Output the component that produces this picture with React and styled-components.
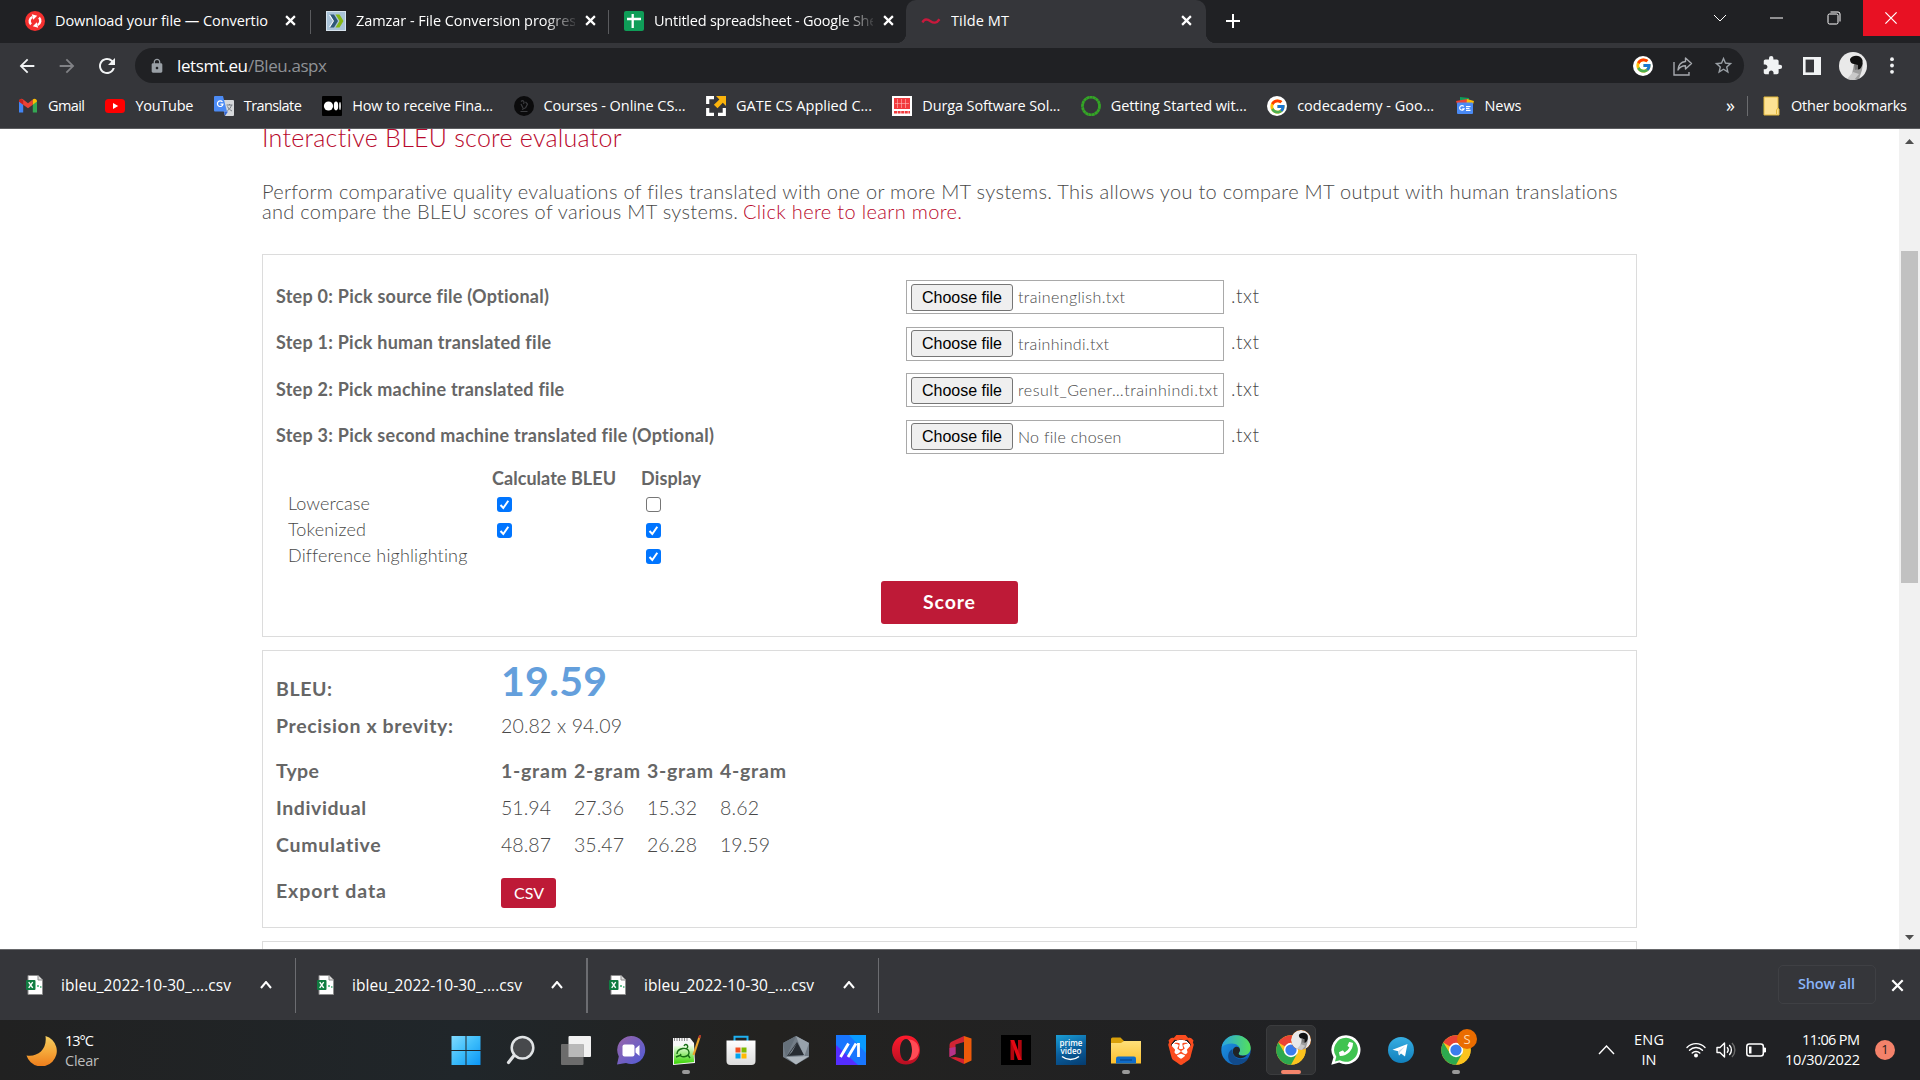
import React, { useLayoutEffect, useRef, useState } from "react";
import styled, { createGlobalStyle, css } from "styled-components";
import { FcGoogle } from "react-icons/fc";
import { MdExtension, MdLock, MdStarBorder, MdRefresh, MdArrowBack, MdArrowForward } from "react-icons/md";
import { SiBrave } from "react-icons/si";
import { FaPhoneAlt } from "react-icons/fa";

const ui = `"Open Sans", "Noto Sans", sans-serif`;
const site = `Lato, "Open Sans", sans-serif`;

const GlobalStyle = createGlobalStyle`
  * { box-sizing: border-box; }
  body { margin: 0; background: #202124; overflow: hidden; }
  svg { display: block; flex: none; }
`;

/* ---------- text ---------- */

const Line = styled.span`
  display: block;
  flex: none;
  white-space: pre;
  width: ${(p) => (p.$w ? p.$w + "px" : "auto")};
`;
const Ink = styled.span`
  display: inline-block;
`;

/* Tracks a single line of text so that it fills exactly `w` pixels. */
function Fit({ w, children }) {
  const ref = useRef(null);
  const [ls, setLs] = useState(0);
  useLayoutEffect(() => {
    const natural = ref.current.getBoundingClientRect().width;
    setLs((w - natural) / Math.max(1, String(children).length - 1));
  }, [w, children]);
  return (
    <Line $w={w}>
      <Ink ref={ref} style={{ letterSpacing: ls + "px" }}>{children}</Ink>
    </Line>
  );
}

/* ---------- window ---------- */

const Screen = styled.div`
  width: 1920px;
  height: 1080px;
  display: flex;
  flex-direction: column;
  overflow: hidden;
  font-family: ${ui};
  font-size: 14.5px;
  color: #fff;
`;

const TabStrip = styled.div`
  height: 43px;
  flex: none;
  display: flex;
  background: #202124;
  padding-left: 10px;
`;
const Tab = styled.div`
  position: relative;
  width: ${(p) => p.$w}px;
  height: 43px;
  padding: 0 14px 2px 15px;
  display: flex;
  align-items: center;
  gap: 10px;
  line-height: 20px;
  ${(p) => p.$active && css`
    background: #35363a;
    border-radius: 10px 10px 0 0;
    &::before, &::after {
      content: "";
      position: absolute;
      bottom: 0;
      width: 10px;
      height: 10px;
    }
    &::before { left: -10px; background: radial-gradient(circle at 0 0, #202124 10px, #35363a 10.5px); }
    &::after { right: -10px; background: radial-gradient(circle at 100% 0, #202124 10px, #35363a 10.5px); }
  `}
`;
const TabTitle = styled.div`
  width: 219px;
  flex: none;
  overflow: hidden;
  ${(p) => p.$fade && css`mask-image: linear-gradient(90deg, #000 86%, transparent 102%);`}
`;
const TabRule = styled.i`
  flex: none;
  width: 1px;
  height: 24px;
  margin-top: 10px;
  background: #5a5b5e;
`;
const Favicon = styled.span`
  width: 20px;
  height: 20px;
  flex: none;
`;
const TabClose = styled.span`
  margin-left: auto;
  display: flex;
`;
const NewTab = styled.span`
  display: flex;
  padding: 13px 0 0 19px;
`;
const WindowButtons = styled.div`
  margin-left: auto;
  display: flex;
`;
const WinButton = styled.span`
  width: 57px;
  height: 36px;
  display: flex;
  align-items: center;
  justify-content: center;
  padding-right: 2px;
  background: ${(p) => (p.$close ? "#e81123" : "transparent")};
`;

const Toolbar = styled.div`
  height: 42px;
  flex: none;
  display: flex;
  align-items: center;
  background: #35363a;
  padding: 3px 0 0 17px;
`;
const NavButton = styled.span`
  width: 20px;
  margin-right: 20px;
  font-size: 22px;
  color: ${(p) => (p.$off ? "#818286" : "#f1f3f4")};
  display: flex;
  justify-content: center;
`;
const AddressBar = styled.div`
  width: 1609px;
  height: 35px;
  margin: 0 0 0 -2px;
  border-radius: 18px;
  background: #202124;
  display: flex;
  align-items: center;
  padding: 0 10px 0 14px;
  font-size: 17px;
  color: #9aa0a6;
`;
const Url = styled.div`
  display: flex;
  margin-left: 12px;
  line-height: 24px;
  color: #8f9296;
  b { font-weight: 400; color: #fff; }
`;
const AddressActions = styled.div`
  margin-left: auto;
  display: flex;
  align-items: center;
  gap: 20px;
`;
const GBadge = styled.span`
  width: 20px;
  height: 20px;
  flex: none;
  border-radius: 50%;
  background: #fff;
  display: flex;
  align-items: center;
  justify-content: center;
`;
const ToolbarActions = styled.div`
  display: flex;
  align-items: center;
  margin-left: 18px;
  color: #f1f3f4;
`;
const Gap = styled.i`
  width: ${(p) => p.$w}px;
  flex: none;
`;

const Bookmarks = styled.div`
  height: 44px;
  flex: none;
  display: flex;
  align-items: center;
  background: #35363a;
  border-bottom: 1px solid #5c5d60;
  padding: 0 13px 1px 18px;
  line-height: 20px;
`;
const Bookmark = styled.span`
  display: flex;
  align-items: center;
  gap: 10px;
  margin-right: 20.4px;
`;
const More = styled.span`
  margin-left: auto;
  font-size: 18px;
  padding-bottom: 3px;
`;
const BarRule = styled.i`
  width: 1px;
  height: 20px;
  background: #6b6c6f;
  margin: 0 15px 0 12px;
`;

/* ---------- page ---------- */

const Viewport = styled.div`
  height: 820px;
  flex: none;
  display: flex;
  justify-content: space-between;
  overflow: hidden;
  background: #fff;
  font-family: ${site};
  color: #666;
`;
const Page = styled.main`
  width: 1375px;
  margin-left: 262px;
`;
const Title = styled.h1`
  margin: -7px 0 29px;
  font-size: 25px;
  line-height: 30px;
  font-weight: 300;
  color: #b8082c;
`;
const Intro = styled.div`
  font-size: 20px;
  line-height: 20px;
  font-weight: 300;
  color: #484848;
  height: 59px;
  margin-bottom: 14px;
`;
const IntroRow = styled.div`
  display: flex;
  gap: 5px;
`;
const LearnMore = styled.a`
  color: #b8082c;
`;
const Panel = styled.section`
  border: 1px solid #dcdcdc;
  height: ${(p) => p.$h}px;
  padding: ${(p) => p.$pad} 13px 0;
  margin-bottom: 13px;
`;
const StepList = styled.div`
  display: flex;
  flex-direction: column;
  gap: 12.67px;
`;
const Step = styled.div`
  display: grid;
  grid-template-columns: 630px 318px auto;
  align-items: center;
  height: 34px;
  font-size: 18px;
`;
const StepLabel = styled.div`
  font-weight: 700;
  line-height: 24px;
  padding-bottom: 3px;
`;
const FileField = styled.div`
  height: 34px;
  border: 1px solid #a9a9a9;
  display: flex;
  align-items: center;
  padding-left: 4px;
  gap: 5px;
  font-size: 16px;
  font-weight: 300;
  line-height: 20px;
  color: #484848;
`;
const ChooseButton = styled.span`
  width: 102px;
  height: 27px;
  border: 1px solid #767676;
  border-radius: 3px;
  background: #efefef;
  color: #000;
  font: 400 16px/25px "Liberation Sans", sans-serif;
  padding-left: 10px;
`;
const Extension = styled.div`
  padding: 0 0 4px 7px;
  font-size: 19px;
  font-weight: 300;
  color: #484848;
`;
const Options = styled.div`
  display: grid;
  grid-template-columns: 204px 149px auto;
  grid-template-rows: 27px 26px 26px 26px;
  align-items: center;
  margin: 11px 0 11px 12px;
  font-weight: 300;
  font-size: 18px;
  line-height: 22px;
`;
const OptionHead = styled.div`
  font-weight: 700;
  font-size: 18px;
`;
const OptionName = styled.div`
  padding-bottom: 4px;
  color: #484848;
`;
const Box = styled.span`
  width: 15px;
  height: 15px;
  margin-left: 5px;
  display: block;
  border-radius: 3px;
  border: ${(p) => (p.$on ? "0" : "1px solid #767676")};
  background: ${(p) => (p.$on ? "#0075ff" : "#fff")};
`;
const ScoreButton = styled.div`
  width: 137px;
  height: 43px;
  margin-left: 605px;
  border-radius: 3px;
  background: #be1a37;
  color: #fff;
  font-size: 19.5px;
  font-weight: 700;
  line-height: 41px;
  padding-left: 42px;
`;

const ResultRow = styled.div`
  display: flex;
  align-items: baseline;
  height: ${(p) => p.$h || 20}px;
  line-height: 20px;
  margin-top: ${(p) => p.$mt}px;
  font-size: 19.5px;
  font-weight: ${(p) => (p.$head ? 700 : 300)};
  color: ${(p) => (p.$head ? "#666" : "#484848")};
`;
const ResultName = styled.div`
  width: 225px;
  font-weight: 700;
  color: #666;
`;
const Gram = styled.div`
  width: 73px;
`;
const BleuScore = styled.div`
  font-size: 41px;
  line-height: 41px;
  font-weight: 700;
  color: #649fdc;
`;
const ExportRow = styled.div`
  display: flex;
  margin-top: 23px;
  font-size: 19.5px;
  line-height: 26px;
`;
const CsvButton = styled.span`
  width: 55px;
  height: 30px;
  border-radius: 3px;
  background: #be1a37;
  color: #fff;
  font-size: 16px;
  line-height: 29px;
  padding-left: 13px;
`;

const Scrollbar = styled.div`
  width: 21px;
  background: #f1f1f1;
  display: flex;
  flex-direction: column;
  align-items: center;
`;
const Thumb = styled.i`
  width: 17px;
  height: 332px;
  margin: 106px 0 auto;
  background: #c1c1c1;
`;

/* ---------- downloads ---------- */

const Downloads = styled.div`
  height: 71px;
  flex: none;
  display: flex;
  align-items: center;
  background: #35363a;
  border-top: 1px solid #67686b;
  padding: 0 16px 0 0;
  font-size: 15.5px;
  line-height: 22px;
`;
const Download = styled.div`
  width: ${(p) => p.$w}px;
  height: 55px;
  border-right: ${(p) => p.$rule || 1}px solid #6c6d71;
  display: flex;
  align-items: center;
  padding-left: ${(p) => p.$pl}px;
  gap: 18px;
`;
const DownloadToggle = styled.span`
  margin-left: 11px;
`;
const ShowAll = styled.div`
  width: 98px;
  height: 39px;
  margin: 0 15px 1px auto;
  border: 1px solid #3f4044;
  border-radius: 5px;
  color: #8ab4f8;
  font-size: 14.5px;
  font-weight: 600;
  line-height: 36px;
  padding-left: 19px;
`;

/* ---------- taskbar ---------- */

const Taskbar = styled.div`
  height: 60px;
  flex: none;
  display: flex;
  background: linear-gradient(90deg, #212121, #20262a 24%, #232220 40%, #202124 70%, #202124);
`;
const Weather = styled.div`
  width: 438px;
  display: flex;
  align-items: center;
  padding: 1px 0 0 25px;
  gap: 8px;
  line-height: 20px;
`;
const Muted = styled.div`
  color: #bdbdbd;
`;
const TaskButton = styled.div`
  position: relative;
  width: 50px;
  height: 50px;
  margin: 5px 5px 0 0;
  flex: none;
  border-radius: 5px;
  display: flex;
  align-items: center;
  justify-content: center;
  ${(p) => p.$active && css`background: #303133; border: 1px solid #3b3c3e;`}
  &::after {
    content: "";
    display: ${(p) => (p.$active || p.$open ? "block" : "none")};
    position: absolute;
    left: 50%;
    bottom: ${(p) => (p.$active ? 0 : 1)}px;
    width: ${(p) => (p.$active ? 20 : 8)}px;
    height: 4px;
    transform: translateX(-50%);
    border-radius: 2px;
    background: ${(p) => (p.$active ? "#f4856c" : "#9a9a9a")};
  }
`;
const TaskButtons = styled.div`
  display: flex;
  margin-left: 3px;
`;
const Tray = styled.div`
  margin-left: auto;
  display: flex;
  align-items: center;
  padding: 0 25px 0 0;
  line-height: 20px;
`;
const TrayText = styled.div`
  display: flex;
  flex-direction: column;
  align-items: ${(p) => p.$align};
`;
const Badge = styled.span`
  width: 20px;
  height: 20px;
  border-radius: 50%;
  background: #f4826a;
  color: #2a1c18;
  font-size: 13px;
  line-height: 19px;
  text-align: center;
  margin-left: 15px;
`;

/* ---------- drawings ---------- */

const Cross = ({ s = 9, c = "#fff", w = 2 }) => (
  <svg width={s} height={s} viewBox="0 0 10 10"><path d="M1 1l8 8M9 1l-8 8" stroke={c} strokeWidth={w} /></svg>
);
const Caret = ({ w, h, sw = 1.5, up, c = "#fff" }) => (
  <svg width={w} height={h} viewBox={`0 0 ${w} ${h}`}>
    <path d={up ? `M1 ${h - 1}L${w / 2} 1L${w - 1} ${h - 1}` : `M1 1L${w / 2} ${h - 1}L${w - 1} 1`} fill="none" stroke={c} strokeWidth={sw} />
  </svg>
);
const S = ({ v = "0 0 20 20", s = 20, children }) => <svg width={s} height={s} viewBox={v}>{children}</svg>;

const Convertio = () => (
  <S>
    <circle cx="10" cy="10" r="10" fill="#f5302f" />
    <path d="M6 13.400A4.600 4.600 0 0 1 7.300 6M14 6.600A4.600 4.600 0 0 1 12.700 14" fill="none" stroke="#fff" strokeWidth="2.400" />
    <path d="M6.800 3.200l5.400 1.600-4 4zM13.200 16.800l-5.400-1.600 4-4z" fill="#fff" />
  </S>
);
const Zamzar = () => (
  <S>
    <rect x=".5" y=".5" width="19" height="19" fill="#a9c3d8" stroke="#d7e3ec" />
    <path d="M3 4h3l4 6-4 6H3l4-6z" fill="#fff" />
    <path d="M4 3.500h4l4 6.500-4 6.500H4l4-6.500z" fill="#2f5878" />
    <path d="M9.500 3.500h4l4 6.500-4 6.500h-4l4-6.500z" fill="#86b817" />
  </S>
);
const Sheets = () => (
  <S><rect width="20" height="20" rx="2" fill="#0f9d58" /><path d="M8.700 3v14M3 8h14" stroke="#fff" strokeWidth="2.300" /></S>
);
const Tilde = () => (
  <S><path d="M1.500 11.500c2-4 5-3.400 8-1.300s6 2.300 9-2" fill="none" stroke="#c8193c" strokeWidth="2.400" /></S>
);
const GmailIcon = () => (
  <S>
    <path d="M1 16.500V5l4.200 3.200v8.300z" fill="#4285f4" />
    <path d="M19 16.500V5l-4.200 3.200v8.300z" fill="#34a853" />
    <path d="M1 5.500c0-2.600 2.700-3.300 4.200-2l4.800 3.700 4.800-3.700v5.200L10 12.300 5.200 8.700 1 5.500z" fill="#ea4335" />
    <path d="M14.800 3.500c1.500-1.300 4.200-.6 4.200 2l-4.200 3.200z" fill="#fbbc04" />
    <path d="M1 5.500c0-1.300.8-2.200 1.800-2.400l2.400.8v4.800z" fill="#c5221f" />
  </S>
);
const YouTubeIcon = () => (
  <S><rect y="3" width="20" height="14" rx="3.500" fill="#f00" /><path d="M8 7l5.200 3L8 13z" fill="#fff" /></S>
);
const TranslateIcon = () => (
  <S>
    <path d="M7 4h12a1 1 0 0 1 1 1v14a1 1 0 0 1-1 1h-8z" fill="#d6d8db" />
    <path d="M1 0h8l4 15.500H1a1 1 0 0 1-1-1V1a1 1 0 0 1 1-1z" fill="#4c8bf5" />
    <path d="M11 20l3-4.500h-4z" fill="#3367d6" />
    <path d="M8.500 6A2.800 2.800 0 1 0 9 8.200H6.500" fill="none" stroke="#fff" strokeWidth="1.200" />
    <path d="M12.500 9h6M15.500 8v1M17.500 9c-.6 2.700-2.400 4.500-4 5.500M13.500 10.500c1 2 2.500 3.500 4.500 4.500" fill="none" stroke="#757b82" />
  </S>
);
const MediumIcon = () => (
  <S><rect width="20" height="20" rx="1" fill="#000" /><circle cx="6.500" cy="10" r="4.600" fill="#fff" /><ellipse cx="14" cy="10" rx="2.200" ry="4.400" fill="#fff" /><ellipse cx="18" cy="10" rx=".8" ry="4" fill="#fff" /></S>
);
const CoursesIcon = () => (
  <S><circle cx="10" cy="10" r="10" fill="#0b0b0c" /><path d="M7 5.500c2-2 4 0 2.500 2.500M7 8l2 4M11.500 6l2 2-2 4M6.500 15.500h7M8 13.500l4-2" fill="none" stroke="#3c3d40" strokeWidth="1.200" /></S>
);
const GateIcon = () => (
  <S>
    <path d="M8 1.700H1.700V8M1.700 12v6.300H8M12 18.300h6.300V12" fill="none" stroke="#fff" strokeWidth="3.200" />
    <path d="M10 0h10v10l-3.200-3.200-5.300 5.500-3.600-3.600 5.500-5.300z" fill="#fbb40c" />
  </S>
);
const DurgaIcon = () => (
  <S>
    <rect width="20" height="20" fill="#fff" />
    <path d="M2 2h16v11H2z" fill="#f23a3d" />
    <path d="M5.500 3v9M9.500 3v9M13.500 3v9M3 7.500h14" stroke="#ffb8b8" strokeWidth=".6" />
    <path d="M2 16.200h16" stroke="#f23a3d" strokeWidth="2.600" strokeDasharray="3 .6" />
  </S>
);
const RingIcon = () => (
  <S><ellipse cx="10" cy="10" rx="8.500" ry="8.800" fill="none" stroke="#34a626" strokeWidth="2.800" strokeDasharray="3 .25" /></S>
);
const NewsIcon = () => (
  <S>
    <path d="M5 1l9 1v6H5z" fill="#0f9d58" />
    <path d="M1 5l11-2 2 8H3z" fill="#ea4335" />
    <path d="M12 3l7 2-2 7h-6z" fill="#fbbc04" />
    <rect x="2" y="6.500" width="16" height="11.500" rx="1" fill="#4a8af4" />
    <path d="M8.800 10.500a2.300 2.300 0 1 0 .3 2.300H7.300M11 10.500h4.500M11 12.400h3.500M11 14.300h4.500" fill="none" stroke="#fff" strokeWidth="1.200" />
  </S>
);
const FolderSheet = () => (
  <svg width="17" height="20" viewBox="0 0 17 20"><path d="M1 1h14v11l1 1v6H1z" fill="#fde293" stroke="#e3b93c" /><path d="M13.500 18v-4l1.500-2" fill="none" stroke="#e3b93c" /></svg>
);
const ShareIcon = () => (
  <S><path d="M1 6v13h15v-3" fill="none" stroke="#a6a9ae" strokeWidth="1.400" /><path d="M12.500 2l6 5.500-6 5.500v-3.200c-4 0-6 1.500-7.500 4.200.3-4.500 2.500-8 7.500-8.500z" fill="none" stroke="#a6a9ae" strokeWidth="1.400" strokeLinejoin="round" /></S>
);
const SidePanel = () => (
  <svg width="18" height="18" viewBox="0 0 18 18"><rect x="1.300" y="1.300" width="15.400" height="15.400" fill="none" stroke="#f1f3f4" strokeWidth="2.600" /><path d="M11 1h6v16h-6z" fill="#f1f3f4" /></svg>
);
const Face = ({ s = 28 }) => (
  <S s={s} v="0 0 28 28">
    <circle cx="14" cy="14" r="14" fill="#e9e9e9" />
    <path d="M15 12l9-1-1 7-3 9-8 .5z" fill="#9d9d9d" />
    <path d="M11 7c3-5 11-4 12.500 1 .5 4-.5 7-2.500 9-2 1-3 0-4-1l-1-4c-3 0-5-1-5-5z" fill="#111" />
    <path d="M15 12l4 1v4l-3 1z" fill="#777" />
    <path d="M14 20l-6 7 7 1 5-6z" fill="#c9c9c9" />
  </S>
);
const Dots = () => (
  <svg width="4" height="17" viewBox="0 0 4 17"><g fill="#f1f3f4"><circle cx="2" cy="2.200" r="1.900" /><circle cx="2" cy="8.500" r="1.900" /><circle cx="2" cy="14.800" r="1.900" /></g></svg>
);
const Excel = () => (
  <svg width="17" height="20" viewBox="0 0 17 20">
    <path d="M2 .5h10l4.500 4.500v14.500H2z" fill="#fff" stroke="#8d8d8d" />
    <path d="M12 .5V5h4.500" fill="#ddd" stroke="#8d8d8d" />
    <path d="M11 10h2v2h-2zM14 11h1.500v2H14z" fill="#6cc294" />
    <rect y="5" width="9.500" height="10" rx="1" fill="#107c41" />
    <path d="M2.700 7.200l4 5.600M6.700 7.200l-4 5.600" stroke="#fff" strokeWidth="1.400" />
  </svg>
);
const Moon = () => (
  <svg width="32" height="30" viewBox="0 0 32 30">
    <defs><linearGradient id="moon" x1="0" y1="0" x2="0" y2="1"><stop offset="0" stopColor="#f5cf62" /><stop offset=".5" stopColor="#f5a93a" /><stop offset="1" stopColor="#ee7d1c" /></linearGradient></defs>
    <path d="M20.500 0A15.500 15.500 0 1 1 1.500 19.500C12 21.500 22.500 14 20.500 0z" fill="url(#moon)" />
  </svg>
);

const T = ({ children, v = "0 0 30 30" }) => <S s={30} v={v}>{children}</S>;
const Grad = ({ id, a, b, x2 = 1, y2 = 1 }) => (
  <defs><linearGradient id={id} x1="0" y1="0" x2={x2} y2={y2}><stop stopColor={a} /><stop offset="1" stopColor={b} /></linearGradient></defs>
);
const WindowsIcon = () => (
  <T><defs><linearGradient id="win" gradientUnits="userSpaceOnUse" x1="0" y1="0" x2="30" y2="30"><stop stopColor="#84dcff" /><stop offset=".5" stopColor="#3dbdfb" /><stop offset="1" stopColor="#0a95f5" /></linearGradient></defs>
    <path d="M.5 1h14v14H.5zM15.500 1h14v14h-14zM.5 16h14v14H.5zM15.500 16h14v14h-14z" fill="url(#win)" /></T>
);
const SearchIcon = () => (
  <T><path d="M8 20.500L2.500 27.500" stroke="#dfe1e3" strokeWidth="3.200" strokeLinecap="round" /><circle cx="16.500" cy="12.800" r="10.800" fill="#47494c" stroke="#e1e4e6" strokeWidth="2.500" /></T>
);
const TaskViewIcon = () => (
  <T><rect x="7.500" y="1" width="22.500" height="21" rx="1" fill="#f1f1f1" /><rect x="0" y="9" width="22.500" height="21" rx="1" fill="#6c6c6c" /><rect x="7.500" y="9" width="15" height="13" fill="#b9b9b9" /></T>
);
const ChatIcon = () => (
  <T><Grad id="chat" a="#9a65a8" b="#4f5bd8" /><path d="M15 1a14 14 0 1 1-5 27L1 29.500l1.800-8A14 14 0 0 1 15 1z" fill="url(#chat)" /><rect x="6.500" y="9.500" width="12" height="12" rx="2" fill="#fff" /><path d="M19.500 13.500l4-3.500v11l-4-3.500z" fill="#fff" /></T>
);
const NotepadIcon = () => (
  <T><Grad id="npp" a="#f4ffef" b="#37d400" x2={0} /><path d="M2 3h17l4 5 1 20-22 2z" fill="#f6f6f6" /><path d="M3 11l19.500-1 .5 17-20 2z" fill="url(#npp)" />
    <path d="M3 4.500h15" stroke="#888" strokeWidth="3" strokeDasharray="1 1.500" />
    <path d="M6 19c0-6 11-8 12-2s-11 6-8 2M13 11c2-4 6 1 2 3M5 22l5-2M17 20l2 3" fill="none" stroke="#176e13" strokeWidth="1.400" />
    <path d="M28.500 2l-6 18" stroke="#e8a12a" strokeWidth="2.200" /><path d="M29.500 0l-1.500 3" stroke="#b43b2c" strokeWidth="2.200" /></T>
);
const StoreIcon = () => (
  <T><Grad id="store" a="#fff" b="#dcdcdc" x2={0} /><path d="M8.500 7V1.700h13V7" fill="none" stroke="#1fb0f0" strokeWidth="2" /><path d="M.5 5.500h29V26a4 4 0 0 1-4 4h-21a4 4 0 0 1-4-4z" fill="url(#store)" />
    <path d="M9.500 12.500h5v5h-5z" fill="#f25022" /><path d="M15.500 12.500h5v5h-5z" fill="#7fba00" /><path d="M9.500 18.500h5v5h-5z" fill="#00a4ef" /><path d="M15.500 18.500h5v5h-5z" fill="#ffb900" /></T>
);
const HexIcon = () => (
  <T><path d="M15 1l13 7v14l-13 7.500L2 22V8z" fill="#737d87" /><path d="M15 1l13 7-5 14z" fill="#98a2ab" /><path d="M15 1L2 8l3 14z" fill="#65707a" /><path d="M16 7l7 13-17 1z" fill="#272c32" /><path d="M5 22l23-1-13 8.500z" fill="#aeb6bd" /><path d="M16 8l-5 9-4 4z" fill="#8d979f" /></T>
);
const MyAsusIcon = () => (
  <T><rect width="30" height="30" fill="#1876ff" /><path d="M0 10v20h22z" fill="#6a16ff" opacity=".75" /><path d="M13 0h17v18z" fill="#03a9ff" opacity=".7" /><path d="M4.500 22L12.500 8.500M12 22L20 8.500M22.500 8v14" stroke="#fff" strokeWidth="2.800" /></T>
);
const OperaIcon = () => (
  <T><Grad id="op" a="#ff1b2d" b="#b80f22" x2={0} /><path fillRule="evenodd" d="M15 .5c8 0 14 6 14 14.500S23 29.500 15 29.500 1 23.500 1 15 7 .5 15 .5zM15 4c-3.800 0-6 5-6 11s2.200 11 6 11 6-5 6-11-2.200-11-6-11z" fill="url(#op)" /><path d="M17 4.500c8 0 11 6 11 10.500s-3 10.500-11 10.500c3-2 4-6 4-10.500s-1-8.500-4-10.500z" fill="#ff4b55" /></T>
);
const OfficeIcon = () => (
  <T><path d="M18 1L6 6.500c-2 1-2.500 2-2.500 4V22l6-3V9.500L18 7z" fill="#d02434" /><path d="M18 1l7.500 2.500v22L18 29z" fill="#ee5a0a" /><path d="M4 22.500L18 29v-5l-8.500-2z" fill="#d4202f" /><path d="M3.500 13v9l6-3v-7z" fill="#b5338a" /></T>
);
const NetflixIcon = () => (
  <T><rect width="30" height="30" fill="#000" /><path d="M9.500 5h3.700v20H9.500zM17 5h3.700v20H17z" fill="#b1060f" /><path d="M9.500 5h3.700l7.500 20H17z" fill="#e50914" /></T>
);
const PrimeTile = styled.div`
  width: 30px;
  height: 30px;
  background: linear-gradient(160deg, #1b9fd6, #0a5f9e 50%, #053b6e);
  color: #fff;
  font-size: 8px;
  font-weight: 600;
  line-height: 8px;
  text-align: center;
  padding-top: 4px;
`;
const PrimeIcon = () => (
  <PrimeTile>prime<br />video<svg width="30" height="6" viewBox="0 0 30 6"><path d="M6 1.500c5 4 12 4 17 0" fill="none" stroke="#fff" strokeWidth="1.500" /></svg></PrimeTile>
);
const ExplorerIcon = () => (
  <T><Grad id="fold" a="#ffe07a" b="#fcbf2d" x2={0} /><path d="M0 4a1.500 1.500 0 0 1 1.500-1.500h8L13 6v4H0z" fill="#d9a00b" /><path d="M0 8h10l3-2h17v22.500H0z" fill="url(#fold)" /><path d="M5 28.500v-5a2 2 0 0 1 2-2h16a2 2 0 0 1 2 2v5z" fill="#0f6cc9" /><path d="M9 25h12" stroke="#0a4d96" strokeWidth="1.500" /></T>
);
const EdgeIcon = () => (
  <T><Grad id="e1" a="#2aa5e0" b="#54e05a" y2={0} /><Grad id="e2" a="#1f9ae6" b="#0c55b0" />
    <circle cx="15" cy="15" r="14.700" fill="url(#e2)" />
    <path d="M.8 12C2 5 8 .3 15 .3c9 0 14.700 6.500 14.700 12.700 0 4.500-3.500 7.500-8 7.500-3.500 0-4.500-1.500-4-2.500.8-1 1.300-2 1.300-3.500 0-3-3.500-6-8-6-4.500 0-8 1.500-10.200 3.500z" fill="url(#e1)" />
    <path d="M27.500 22.500C25 27 20 30 15 29.700c-6-.5-9-6-7.500-11 .8-2.500 2.500-4 4-4.700-1 5 3 10 8.500 10 3 0 5-.5 7.500-1.500z" fill="#114a8b" />
    <path d="M12.500 13.500c2-3 6.500-2 6.500 1.500 0 2-2 3-1 4.500 1.500 1.500 5 1.500 8 .5-3 3.500-8 4-11 2-3-1.800-4-5.500-2.500-8.500z" fill="#202326" />
    <path d="M28.700 20.500L31 17v9l-4-2z" fill="#202326" /></T>
);
const ChromeIcon = () => (
  <T>
    <circle cx="15" cy="15" r="14.700" fill="#fcc31e" />
    <path d="M15 15L2.300 7.600A14.700 14.700 0 0 1 27.700 7.600z" fill="#ea4335" />
    <path d="M15 8h12.900A14.700 14.700 0 0 1 15 29.700l6-11z" fill="#fcc31e" />
    <path d="M2.300 7.600A14.700 14.700 0 0 0 15 29.700l6.200-11.200L9 18.500z" fill="#2da94f" />
    <circle cx="15" cy="15" r="7.200" fill="#fff" /><circle cx="15" cy="15" r="5.600" fill="#3b7ded" />
  </T>
);
const CornerBadge = styled.span`
  position: absolute;
  top: 4px;
  right: 4px;
  width: 20px;
  height: 20px;
  border-radius: 50%;
  overflow: hidden;
  background: #ea6c00;
  color: #ffd9b0;
  font-size: 13px;
  line-height: 20px;
  text-align: center;
`;
const WhatsAppPhone = styled.span`
  position: absolute;
  left: 18px;
  top: 17px;
  font-size: 14px;
  color: #fff;
  svg { transform: scaleX(-1); }
`;
const WhatsAppIcon = () => (
  <>
    <T><path d="M15.200.3a14.500 14.500 0 1 1-7 27.300L.3 29.700l2.200-7.500A14.500 14.500 0 0 1 15.200.3z" fill="#fff" /><path d="M15.200 2.800a12 12 0 1 1-6.300 22.400L4 26.500l1.300-4.800A12 12 0 0 1 15.200 2.800z" fill="#40c351" /></T>
    <WhatsAppPhone><FaPhoneAlt /></WhatsAppPhone>
  </>
);
const TelegramIcon = () => (
  <S s={26} v="0 0 26 26"><Grad id="tg" a="#37aee2" b="#1180bd" x2={0} /><circle cx="13" cy="13" r="13" fill="url(#tg)" /><path d="M4.500 12.800L19.500 7l-2.500 12.500-4-3-2 2-.8-4.200z" fill="#fff" /><path d="M10.200 14.300l7-5-5 5.500-1.200 3.700z" fill="#c8daea" /></S>
);
const BraveHolder = styled.span`
  display: flex;
  font-size: 30px;
  color: #fb4c1f;
  background: radial-gradient(ellipse at center, #fff 48%, transparent 50%);
`;
const BraveIcon = () => <BraveHolder><SiBrave /></BraveHolder>;

const WifiIcon = () => (
  <svg width="20" height="16" viewBox="0 0 20 16"><g fill="none" stroke="#fff" strokeWidth="1.400" strokeLinecap="round"><path d="M1 5.500a12.500 12.500 0 0 1 18 0M3.500 8.300a9 9 0 0 1 13 0M6.200 11a5.500 5.500 0 0 1 7.600 0" /></g><circle cx="10" cy="13.500" r="2" fill="#fff" /></svg>
);
const SpeakerIcon = () => (
  <svg width="21" height="18" viewBox="0 0 21 18"><path d="M1 6.500h3L8.500 2v14L4 11.500H1z" fill="none" stroke="#fff" strokeWidth="1.400" strokeLinejoin="round" /><path d="M11 6.300a4 4 0 0 1 0 5.400M13.300 4a7 7 0 0 1 0 10" fill="none" stroke="#fff" strokeWidth="1.400" /><path d="M16 2a10 10 0 0 1 0 14" fill="none" stroke="#6c6c6c" strokeWidth="1.400" /></svg>
);
const BatteryIcon = () => (
  <svg width="21" height="14" viewBox="0 0 21 14"><rect x=".8" y="1" width="16.500" height="12" rx="2.500" fill="none" stroke="#fff" strokeWidth="1.500" /><path d="M3 3.500h2.500v7H3z" fill="#fff" /><path d="M18 5h1.500v4H18z" fill="#fff" stroke="#fff" /></svg>
);
const Tick = () => (
  <svg width="15" height="15" viewBox="0 0 15 15"><path d="M3.500 8l2.800 3 5-7.300" fill="none" stroke="#fff" strokeWidth="2" /></svg>
);
const Triangle = ({ up }) => (
  <svg width="9" height="6" viewBox="0 0 9 6"><path d={up ? "M0 5L4.500 0L9 5z" : "M0 0h9L4.500 5z"} fill="#4f4f4f" /></svg>
);
const ArrowSlot = styled.span`
  padding: ${(p) => p.$p};
  line-height: 0;
`;

/* ---------- data ---------- */

const bookmarks = [
  [GmailIcon, "Gmail", 37], [YouTubeIcon, "YouTube", 58], [TranslateIcon, "Translate", 58],
  [MediumIcon, "How to receive Fina...", 141], [CoursesIcon, "Courses - Online CS...", 142], [GateIcon, "GATE CS Applied C...", 136],
  [DurgaIcon, "Durga Software Sol...", 138], [RingIcon, "Getting Started wit...", 136],
  [() => <GBadge><FcGoogle size={17} /></GBadge>, "codecademy - Goo...", 137], [NewsIcon, "News", 37],
];
const steps = [
  ["Step 0: Pick source file (Optional)", 273, "trainenglish.txt", 107],
  ["Step 1: Pick human translated file", 275, "trainhindi.txt", 91],
  ["Step 2: Pick machine translated file", 288, "result_Gener…trainhindi.txt", 200],
  ["Step 3: Pick second machine translated file (Optional)", 438, "No file chosen", 103],
];
const options = [["Lowercase", 82, true, false], ["Tokenized", 78, true, true], ["Difference highlighting", 179, null, true]];
const scores = [
  ["Individual", 90, ["51.94", "27.36", "15.32", "8.62"]],
  ["Cumulative", 105, ["48.87", "35.47", "26.28", "19.59"]],
];
const tasks = [
  [WindowsIcon], [SearchIcon], [TaskViewIcon], [ChatIcon], [NotepadIcon, { $open: true }], [StoreIcon], [HexIcon], [MyAsusIcon],
  [OperaIcon], [OfficeIcon], [NetflixIcon], [PrimeIcon], [ExplorerIcon, { $open: true }], [BraveIcon], [EdgeIcon],
  [() => <><ChromeIcon /><CornerBadge><Face s={20} /></CornerBadge></>, { $active: true }],
  [WhatsAppIcon], [TelegramIcon],
  [() => <><ChromeIcon /><CornerBadge>S</CornerBadge></>, { $open: true }],
];

const Check = ({ on }) => (on === null ? <span /> : <Box $on={on}>{on && <Tick />}</Box>);

export default function App() {
  return (
    <Screen>
      <GlobalStyle />
      <TabStrip>
        <Tab $w={300}><Favicon><Convertio /></Favicon><TabTitle><Fit w={213}>Download your file — Convertio</Fit></TabTitle><TabClose><Cross s={11} /></TabClose></Tab>
        <TabRule />
        <Tab $w={297}><Favicon><Zamzar /></Favicon><TabTitle $fade><Fit w={227}>Zamzar - File Conversion progress</Fit></TabTitle><TabClose><Cross s={11} /></TabClose></Tab>
        <TabRule />
        <Tab $w={297}><Favicon><Sheets /></Favicon><TabTitle $fade><Fit w={243}>Untitled spreadsheet - Google Sheets</Fit></TabTitle><TabClose><Cross s={11} /></TabClose></Tab>
        <Tab $w={300} $active><Favicon><Tilde /></Favicon><TabTitle><Fit w={58}>Tilde MT</Fit></TabTitle><TabClose><Cross s={11} /></TabClose></Tab>
        <NewTab><svg width="16" height="16" viewBox="0 0 16 16"><path d="M8 1v14M1 8h14" stroke="#fff" strokeWidth="2" /></svg></NewTab>
        <WindowButtons>
          <WinButton><Caret w={14} h={8} sw={1} /></WinButton>
          <WinButton><svg width="13" height="2"><path d="M0 1h13" stroke="#fff" strokeWidth="1" /></svg></WinButton>
          <WinButton><svg width="14" height="14" viewBox="0 0 14 14"><rect x="1" y="3" width="10" height="10" rx="1.500" fill="none" stroke="#fff" /><path d="M3.500 1H11a2 2 0 0 1 2 2v7.500" fill="none" stroke="#fff" /></svg></WinButton>
          <WinButton $close><Cross s={14} w={0.9} /></WinButton>
        </WindowButtons>
      </TabStrip>

      <Toolbar>
        <NavButton><MdArrowBack /></NavButton>
        <NavButton $off><MdArrowForward /></NavButton>
        <NavButton><MdRefresh size={24} /></NavButton>
        <AddressBar>
          <MdLock size={16} />
          <Url><b><Fit w={71}>letsmt.eu</Fit></b><Fit w={79}>/Bleu.aspx</Fit></Url>
          <AddressActions><GBadge><FcGoogle size={17} /></GBadge><ShareIcon /><MdStarBorder size={21} /></AddressActions>
        </AddressBar>
        <ToolbarActions>
          <MdExtension size={21} /><Gap $w={20} /><SidePanel /><Gap $w={18} /><Face /><Gap $w={23} /><Dots />
        </ToolbarActions>
      </Toolbar>

      <Bookmarks>
        {bookmarks.map(([Icon, name, w]) => (
          <Bookmark key={name}><Icon /><Fit w={w}>{name}</Fit></Bookmark>
        ))}
        <More>»</More>
        <BarRule />
        <FolderSheet />
        <Gap $w={11} />
        <Fit w={116}>Other bookmarks</Fit>
      </Bookmarks>

      <Viewport>
        <Page>
          <Title><Fit w={360}>Interactive BLEU score evaluator</Fit></Title>
          <Intro>
            <Fit w={1356}>Perform comparative quality evaluations of files translated with one or more MT systems. This allows you to compare MT output with human translations</Fit>
            <IntroRow>
              <Fit w={476}>and compare the BLEU scores of various MT systems.</Fit>
              <LearnMore><Fit w={219}>Click here to learn more.</Fit></LearnMore>
            </IntroRow>
          </Intro>

          <Panel $h={383} $pad="25px">
            <StepList>
              {steps.map(([label, w, file, fw]) => (
                <Step key={label}>
                  <StepLabel><Fit w={w}>{label}</Fit></StepLabel>
                  <FileField><ChooseButton><Fit w={80}>Choose file</Fit></ChooseButton><Fit w={fw}>{file}</Fit></FileField>
                  <Extension><Fit w={28}>.txt</Fit></Extension>
                </Step>
              ))}
            </StepList>
            <Options>
              <span />
              <OptionHead><Fit w={124}>Calculate BLEU</Fit></OptionHead>
              <OptionHead><Fit w={60}>Display</Fit></OptionHead>
              {options.map(([name, w, calc, show]) => (
                <React.Fragment key={name}>
                  <OptionName><Fit w={w}>{name}</Fit></OptionName>
                  <Check on={calc} />
                  <Check on={show} />
                </React.Fragment>
              ))}
            </Options>
            <ScoreButton><Fit w={52}>Score</Fit></ScoreButton>
          </Panel>

          <Panel $h={278} $pad="9px">
            <ResultRow $h={40} $mt={0}><ResultName><Fit w={56}>BLEU:</Fit></ResultName><BleuScore><Fit w={106}>19.59</Fit></BleuScore></ResultRow>
            <ResultRow $mt={16}><ResultName><Fit w={177}>Precision x brevity:</Fit></ResultName><Fit w={121}>20.82 x 94.09</Fit></ResultRow>
            <ResultRow $mt={25} $head>
              <ResultName><Fit w={43}>Type</Fit></ResultName>
              {["1-gram", "2-gram", "3-gram", "4-gram"].map((g) => <Gram key={g}><Fit w={66}>{g}</Fit></Gram>)}
            </ResultRow>
            {scores.map(([name, w, values]) => (
              <ResultRow $mt={17} key={name}>
                <ResultName><Fit w={w}>{name}</Fit></ResultName>
                {values.map((v) => <Gram key={v}><Fit w={v.length > 4 ? 50 : 39}>{v}</Fit></Gram>)}
              </ResultRow>
            ))}
            <ExportRow><ResultName><Fit w={110}>Export data</Fit></ResultName><CsvButton><Fit w={30}>CSV</Fit></CsvButton></ExportRow>
          </Panel>
          <Panel $h={200} $pad="0" />
        </Page>
        <Scrollbar>
          <ArrowSlot $p="10px 0 0"><Triangle up /></ArrowSlot>
          <Thumb />
          <ArrowSlot $p="0 0 8px"><Triangle /></ArrowSlot>
        </Scrollbar>
      </Viewport>

      <Downloads>
        {[[296, 26, 1], [292, 21, 2], [291, 21, 1]].map(([w, pl, rule]) => (
          <Download key={w} $w={w} $pl={pl} $rule={rule}>
            <Excel /><Fit w={170}>ibleu_2022-10-30_....csv</Fit><DownloadToggle><Caret w={12} h={8} sw={2} up /></DownloadToggle>
          </Download>
        ))}
        <ShowAll><Fit w={57}>Show all</Fit></ShowAll>
        <Cross s={13} w={1.7} />
      </Downloads>

      <Taskbar>
        <Weather><Moon /><div><Fit w={29}>13°C</Fit><Muted><Fit w={34}>Clear</Fit></Muted></div></Weather>
        <TaskButtons>
          {tasks.map(([Icon, state], i) => <TaskButton key={i} {...state}><Icon /></TaskButton>)}
        </TaskButtons>
        <Tray>
          <Caret w={17} h={10} up sw={1.4} />
          <Gap $w={19} />
          <TrayText $align="center"><Fit w={30}>ENG</Fit><Fit w={15}>IN</Fit></TrayText>
          <Gap $w={22} /><WifiIcon /><Gap $w={10} /><SpeakerIcon /><Gap $w={9} /><BatteryIcon /><Gap $w={18} />
          <TrayText $align="flex-end"><Fit w={58}>11:06 PM</Fit><Fit w={75}>10/30/2022</Fit></TrayText>
          <Badge>1</Badge>
        </Tray>
      </Taskbar>
    </Screen>
  );
}
